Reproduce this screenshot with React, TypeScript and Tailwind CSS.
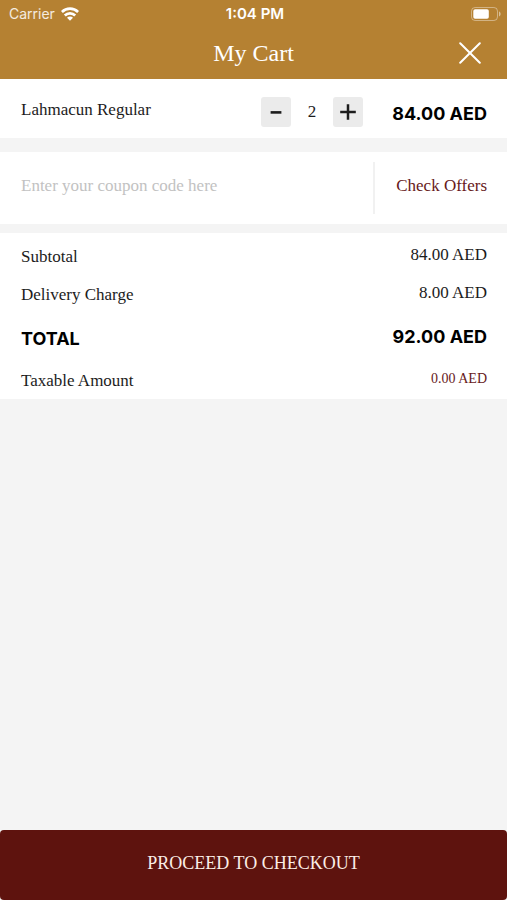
import { useState } from 'react';
import clsx from 'clsx';

const UNIT_PRICE = 42;
const DELIVERY_CHARGE = 8;

const formatPrice = (value: number) => `${value.toFixed(2)} AED`;

const WifiIcon = () => (
    <svg viewBox="0 0 18 14" className="w-[18px] h-[14px]" fill="none" stroke="currentColor" strokeWidth="2.7" aria-hidden="true">
        <path d="M0.9 5a11.5 11.5 0 0 1 16.2 0" />
        <path d="M3.8 8.5a7.3 7.3 0 0 1 10.4 0" />
        <path d="M9 13.8 6 10.8a4.2 4.2 0 0 1 6 0Z" fill="currentColor" stroke="none" />
    </svg>
);

const BatteryIcon = () => (
    <svg viewBox="0 0 30 14" className="w-[30px] h-[14px]" fill="none" aria-hidden="true">
        <rect x="0.5" y="0.5" width="26" height="13" rx="3.6" stroke="white" strokeOpacity="0.4" />
        <rect x="2.3" y="2.3" width="15.5" height="9.4" rx="1.8" fill="white" />
        <path d="M28 4.6c1 .3 1.6 1.3 1.6 2.4S29 9.1 28 9.4Z" fill="white" fillOpacity="0.5" />
    </svg>
);

const StatusBar = () => (
    <div className="grid grid-cols-3 items-center h-7 pl-[9px] pr-[6px] font-['Inter',sans-serif] text-sm leading-5">
        <div className="flex items-center gap-[6px] text-white/85">
            <span>Carrier</span>
            <span className="text-white"><WifiIcon /></span>
        </div>
        <span className="text-center text-[15px] font-semibold">1:04 PM</span>
        <div className="flex justify-end"><BatteryIcon /></div>
    </div>
);

interface SummaryRowProps {
    label: string;
    value: string;
    className?: string;
    labelClass?: string;
    valueClass?: string;
}

const SummaryRow = ({ label, value, className, labelClass, valueClass }: SummaryRowProps) => (
    <div className={clsx('flex items-start justify-between', className)}>
        <dt className={clsx('leading-6', labelClass)}>{label}</dt>
        <dd className={clsx('leading-5', valueClass)}>{value}</dd>
    </div>
);

const App = () => {
    const [quantity, setQuantity] = useState(2);
    const [coupon, setCoupon] = useState('');

    const subtotal = quantity * UNIT_PRICE;
    const boldText = "font-['Inter',sans-serif] text-[18px] font-bold text-black";

    return (
        <div className="flex flex-col min-h-screen bg-[#f4f4f4] font-['Liberation_Serif',serif] text-[17px] text-[#1c1c1c]">
            <header className="bg-[#b58132] text-white">
                <StatusBar />
                <div className="grid grid-cols-[40px_1fr_40px] items-center h-[51px] px-[17px] pb-[2px]">
                    <h1 className="col-start-2 text-center text-[24px] leading-8">My Cart</h1>
                    <button type="button" aria-label="Close cart" className="flex items-center justify-center h-10 cursor-pointer">
                        <svg viewBox="0 0 22 22" className="w-[22px] h-[22px]" stroke="currentColor" strokeWidth="2" strokeLinecap="round" aria-hidden="true">
                            <path d="M1.2 1.2 20.8 20.8M20.8 1.2 1.2 20.8" />
                        </svg>
                    </button>
                </div>
            </header>

            <main className="grow">
                {/* Cart item */}
                <section className="flex items-center bg-white pl-[21px] pr-5 pt-[18px] pb-[11px]">
                    <h2 className="grow leading-6 pb-1">Lahmacun Regular</h2>
                    <div className="flex items-center">
                        <button
                            type="button"
                            aria-label="Decrease quantity"
                            onClick={() => setQuantity(Math.max(1, quantity - 1))}
                            className="flex items-center justify-center w-[30px] h-[30px] rounded-[3px] bg-[#ebebeb] cursor-pointer"
                        >
                            <svg viewBox="0 0 16 16" className="w-4 h-4" stroke="#1c1c1c" strokeWidth="2.6" aria-hidden="true">
                                <path d="M2.6 8.4h10.8" />
                            </svg>
                        </button>
                        <span className="w-[42px] text-center leading-6">{quantity}</span>
                        <button
                            type="button"
                            aria-label="Increase quantity"
                            onClick={() => setQuantity(quantity + 1)}
                            className="flex items-center justify-center w-[30px] h-[30px] rounded-[3px] bg-[#ebebeb] cursor-pointer"
                        >
                            <svg viewBox="0 0 16 16" className="w-4 h-4" stroke="#1c1c1c" strokeWidth="2.5" aria-hidden="true">
                                <path d="M0.2 8h15.6M8 0.2v15.6" />
                            </svg>
                        </button>
                    </div>
                    <span className={clsx('w-[124px] pt-1 text-right leading-6', boldText)}>{formatPrice(subtotal)}</span>
                </section>

                {/* Coupon */}
                <section className="flex mt-[14px] bg-white pl-[21px] pr-5 py-[10px]">
                    <input
                        type="text"
                        aria-label="Coupon code"
                        placeholder="Enter your coupon code here"
                        value={coupon}
                        onChange={(e) => setCoupon(e.target.value)}
                        className="grow min-w-0 h-[52px] pb-1 outline-none placeholder:text-[#c2c2c2]"
                    />
                    <button type="button" className="w-[114px] pb-1 border-l-2 border-[#f1f1f1] text-right text-[#67191b] cursor-pointer">
                        Check Offers
                    </button>
                </section>

                {/* Totals */}
                <dl className="mt-[9px] bg-white pl-[21px] pr-5 pt-3 pb-[6px]">
                    <SummaryRow label="Subtotal" value={formatPrice(subtotal)} className="pb-[14px]" />
                    <SummaryRow label="Delivery Charge" value={formatPrice(DELIVERY_CHARGE)} className="pb-5" />
                    <SummaryRow
                        label="TOTAL"
                        value={formatPrice(subtotal + DELIVERY_CHARGE)}
                        className="pb-[18px]"
                        labelClass={boldText}
                        valueClass={boldText}
                    />
                    <SummaryRow label="Taxable Amount" value={formatPrice(0)} valueClass="text-[14px] text-[#67191b]" />
                </dl>
            </main>

            <button type="button" className="h-[70px] pb-1 rounded-[4px] bg-[#5e130e] text-[#fbeee6] text-[18px] cursor-pointer">
                PROCEED TO CHECKOUT
            </button>
        </div>
    );
};

export default App;
